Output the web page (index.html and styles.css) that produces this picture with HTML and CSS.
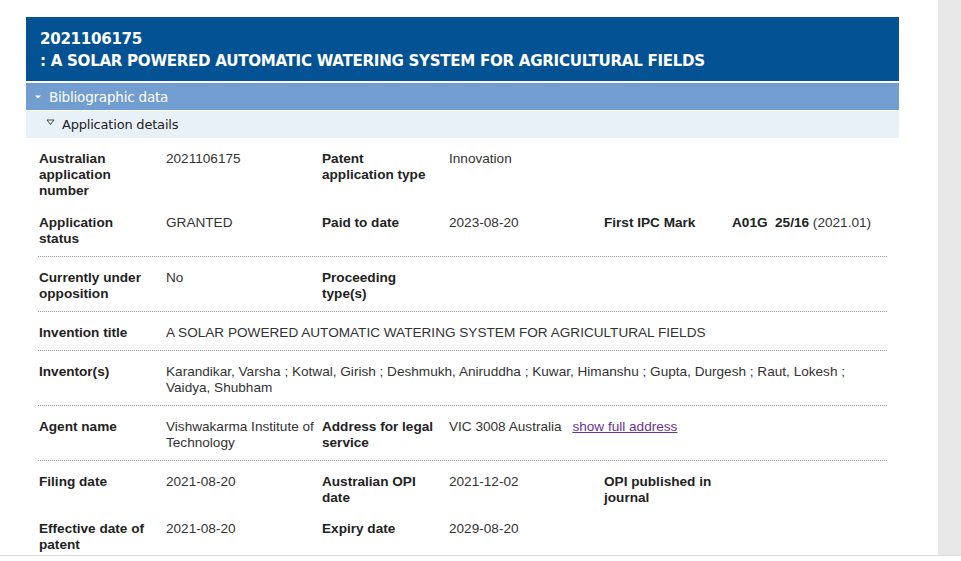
FILE: index.html
```html
<!DOCTYPE html>
<html>
<head>
<meta charset="utf-8">
<link rel="stylesheet" href="styles.css">
</head>
<body>
<div class="frame">
  <div class="main">
    <div class="card">
      <div class="title">
        <div>2021106175</div>
        <div>: A SOLAR POWERED AUTOMATIC WATERING SYSTEM FOR AGRICULTURAL FIELDS</div>
      </div>
      <div class="bar-biblio">
        <svg class="tri" width="8" height="6" viewBox="0 0 8 6"><path d="M1 1.5h6L4 4.5z" fill="#fff"/></svg>
        <span>Bibliographic data</span>
      </div>
      <div class="bar-app">
        <svg class="tri2" width="9" height="7" viewBox="0 0 9 7"><path d="M1 1h7L4.5 5.5z" fill="none" stroke="#333" stroke-width="0.9"/></svg>
        <span>Application details</span>
      </div>
      <div class="details">
        <div class="row">
          <div class="lbl">Australian application number</div>
          <div class="val">2021106175</div>
          <div class="lbl">Patent application type</div>
          <div class="val">Innovation</div>
          <div class="lbl"></div>
          <div class="val"></div>
        </div>
        <div class="row sep">
          <div class="lbl">Application status</div>
          <div class="val">GRANTED</div>
          <div class="lbl">Paid to date</div>
          <div class="val">2023-08-20</div>
          <div class="lbl">First IPC Mark</div>
          <div class="val"><b>A01G&nbsp; 25/16</b> (2021.01)</div>
        </div>
        <div class="row sep">
          <div class="lbl">Currently under opposition</div>
          <div class="val">No</div>
          <div class="lbl">Proceeding type(s)</div>
          <div class="val"></div>
          <div class="lbl"></div>
          <div class="val"></div>
        </div>
        <div class="row sep">
          <div class="lbl">Invention title</div>
          <div class="val wide">A SOLAR POWERED AUTOMATIC WATERING SYSTEM FOR AGRICULTURAL FIELDS</div>
        </div>
        <div class="row sep">
          <div class="lbl">Inventor(s)</div>
          <div class="val wide inv">Karandikar, Varsha ; Kotwal, Girish ; Deshmukh, Aniruddha ; Kuwar, Himanshu ; Gupta, Durgesh ; Raut, Lokesh ; Vaidya, Shubham</div>
        </div>
        <div class="row sep">
          <div class="lbl">Agent name</div>
          <div class="val">Vishwakarma Institute of Technology</div>
          <div class="lbl">Address for legal service</div>
          <div class="val span3">VIC 3008 Australia <a class="addr" href="#">show full address</a></div>
        </div>
        <div class="row">
          <div class="lbl">Filing date</div>
          <div class="val">2021-08-20</div>
          <div class="lbl">Australian OPI date</div>
          <div class="val">2021-12-02</div>
          <div class="lbl">OPI published in journal</div>
          <div class="val"></div>
        </div>
        <div class="row">
          <div class="lbl">Effective date of patent</div>
          <div class="val">2021-08-20</div>
          <div class="lbl">Expiry date</div>
          <div class="val">2029-08-20</div>
          <div class="lbl"></div>
          <div class="val"></div>
        </div>
      </div>
    </div>
  </div>
  <div class="side"></div>
</div>
</body>
</html>
```
FILE: styles.css
```css
html, body {
  margin: 0;
  padding: 0;
  background: #fff;
}
.frame {
  display: flex;
  height: 555px;
  overflow: hidden;
  border-bottom: 1px solid #dcdcdc;
}
.main {
  width: 938px;
  flex: none;
  padding: 17px 0 0 26px;
  box-sizing: border-box;
}
.side {
  flex: 1;
  background: #e8e8e8;
}
.card {
  width: 873px;
}
.title {
  background: #025294;
  color: #fff;
  font-family: "DejaVu Sans", sans-serif;
  font-weight: bold;
  font-size: 15.1px;
  line-height: 22px;
  padding: 11px 14px 9px 14px;
  box-sizing: border-box;
  border-bottom: 2px solid #fff;
  height: 66px;
  letter-spacing: -0.3px;
}
.bar-biblio {
  background: #729dd1;
  color: #fff;
  font-family: "DejaVu Sans", sans-serif;
  font-size: 13.5px;
  height: 27px;
  display: flex;
  align-items: center;
  padding-left: 8px;
  border-bottom: 1px solid #fff;
  letter-spacing: -0.2px;
}
.bar-biblio .tri {
  margin-right: 7px;
}
.bar-app {
  background: #e8f0f8;
  color: #222;
  font-family: "DejaVu Sans", sans-serif;
  font-size: 13px;
  height: 27px;
  display: flex;
  align-items: center;
  padding-left: 20px;
  letter-spacing: -0.2px;
}
.bar-app .tri2 {
  margin-right: 7px;
  margin-top: -4px;
}
.details {
  margin-left: 12px;
  width: 849px;
  font-family: "Liberation Sans", Arial, sans-serif;
  font-size: 13.6px;
  line-height: 16px;
  color: #333;
  padding-top: 0.5px;
}
.row {
  display: grid;
  grid-template-columns: 128px 155px 128px 154px 129px 155px;
  padding: 12.5px 0 3px;
}
.row.sep {
  border-bottom: 1px dotted #999;
  padding-bottom: 9.5px;
}
.lbl {
  font-weight: bold;
  color: #222;
  padding-left: 1px;
  padding-right: 14px;
}
.val {
  padding-right: 4px;
}
.val b {
  color: #222;
}
.wide {
  grid-column: 2 / 7;
}
.inv {
  padding-right: 30px;
}
.span3 {
  grid-column: 4 / 7;
}
.addr {
  color: #663399;
  margin-left: 7px;
}
```
